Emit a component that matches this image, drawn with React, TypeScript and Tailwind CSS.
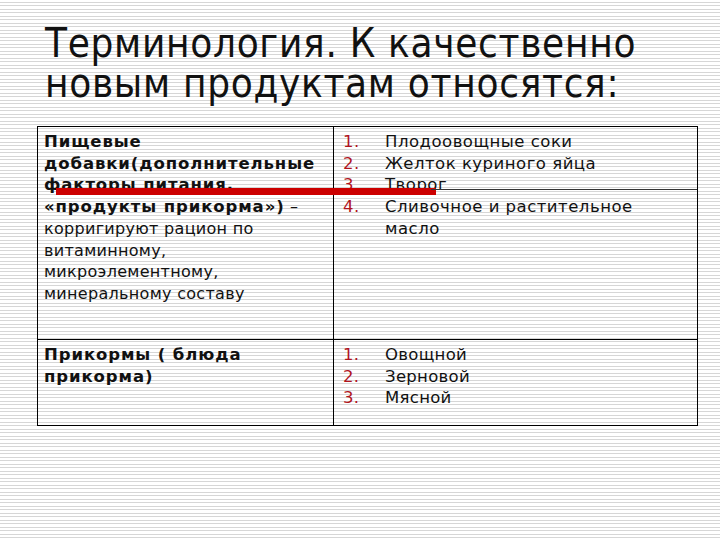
import React from "react";

const stripe =
  "bg-white bg-[image:repeating-linear-gradient(180deg,#ffffff_0px,#ffffff_2px,#d6d6d6_2px,#d6d6d6_3px,#ffffff_3px,#ffffff_5px,#d6d6d6_5px,#d6d6d6_6px,#ffffff_6px,#ffffff_7px)]";

function Item({ n, children }: { n: string; children: React.ReactNode }) {
  return (
    <div className="flex">
      <span className="w-[42px] shrink-0 text-[#b0141e]">{n}</span>
      <span>{children}</span>
    </div>
  );
}

export default function App() {
  return (
    <div
      className={`w-[720px] h-[540px] overflow-hidden ${stripe} relative`}
      style={{ fontFamily: '"DejaVu Sans", Verdana, sans-serif' }}
    >
      <h1
        className="pl-[45px] pt-[23px] text-[40px] leading-[40px] text-[#111] tracking-[0.7px]"
        style={{ fontFamily: '"DejaVu Sans Condensed", "DejaVu Sans", sans-serif' }}
      >
        Терминология. К качественно
        <br />
        новым продуктам относятся:
      </h1>

      <div className="relative ml-[37px] mt-[23px] w-[661px] border-[1.5px] border-black grid grid-cols-[296px_1fr] text-[16px] leading-[21.7px] text-[#111]">
        <div className="h-[212px] border-r-[1.5px] border-black pl-[6px] pt-[4px] tracking-[0.3px]">
          <div className="font-bold text-[16.5px] tracking-[0.9px]">
            Пищевые
            <br />
            добавки(дополнительные
            <br />
            факторы питания,
            <br />
            «продукты прикорма»)
            <span className="font-normal text-[16px] tracking-[0.3px]"> –</span>
          </div>
          <div>
            корригируют рацион по
            <br />
            витаминному,
            <br />
            микроэлементному,
            <br />
            минеральному составу
          </div>
        </div>
        <div className="pl-[9px] pt-[4px] text-[16.5px] tracking-[0.5px]">
          <Item n="1.">Плодоовощные соки</Item>
          <Item n="2.">Желток куриного яйца</Item>
          <Item n="3.">Творог</Item>
          <Item n="4.">
            Сливочное и растительное
            <br />
            масло
          </Item>
        </div>

        <div className="h-[86px] border-t-[1.5px] border-r-[1.5px] border-black pl-[6px] pt-[4px] font-bold text-[16.5px] tracking-[0.9px]">
          Прикормы ( блюда
          <br />
          прикорма)
        </div>
        <div className="border-t-[1.5px] border-black pl-[9px] pt-[4px] text-[16.5px] tracking-[0.3px]">
          <Item n="1.">Овощной</Item>
          <Item n="2.">Зерновой</Item>
          <Item n="3.">Мясной</Item>
        </div>

        <div className="absolute left-[18px] top-[61px] w-[380px] h-[7px] bg-[#cc0000]" />
        <div className="absolute left-[393px] top-[62px] w-[266px] h-[1px] bg-[#333]" />
      </div>
    </div>
  );
}
